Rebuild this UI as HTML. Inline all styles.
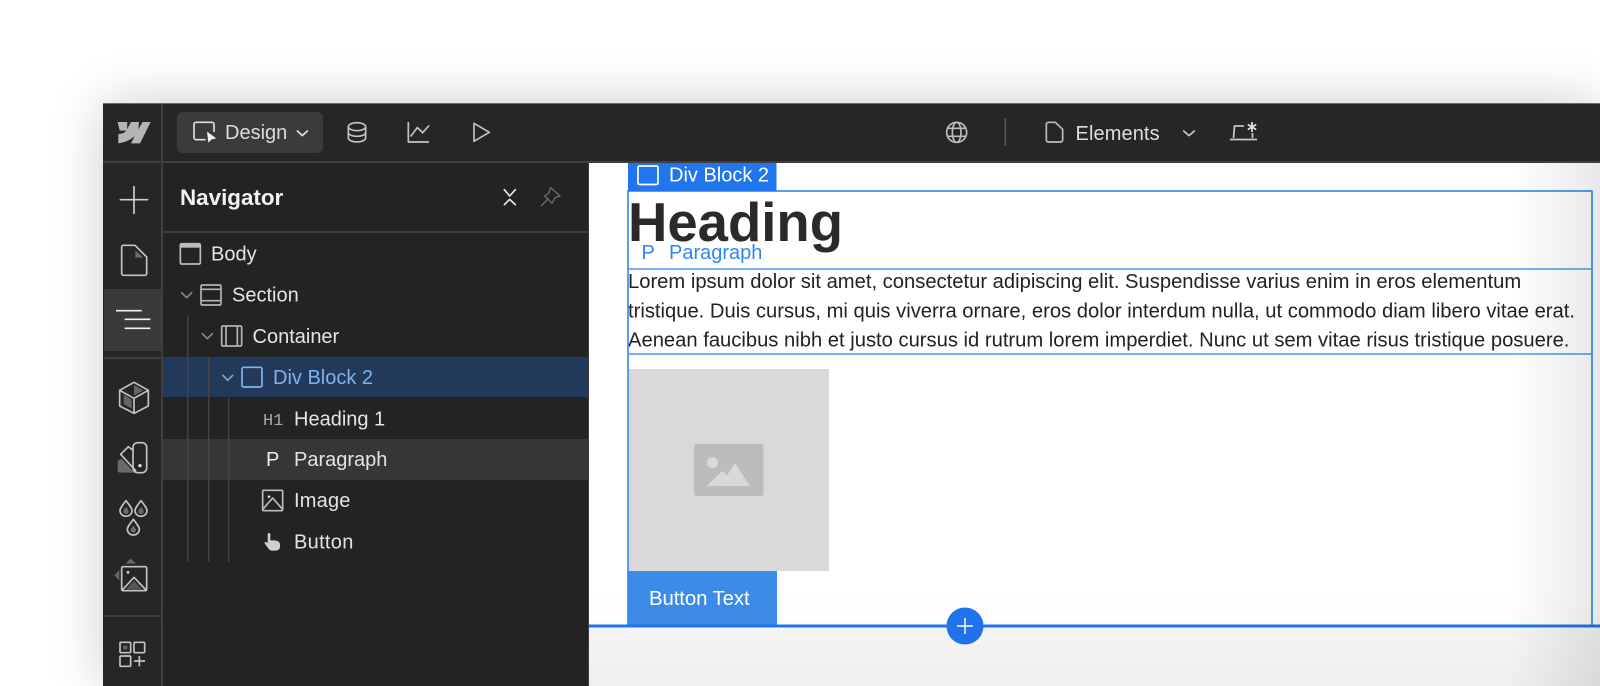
<!DOCTYPE html>
<html><head><meta charset="utf-8"><style>
html,body{margin:0;padding:0;width:1600px;height:686px;overflow:hidden;background:#fff}
#wrap{position:absolute;left:0;top:0;width:1600px;height:686px;overflow:hidden;background:#fff}
svg{display:block;position:absolute;left:0;top:0;filter:blur(.35px)}
text{font-family:"Liberation Sans",sans-serif}
#win{position:absolute;left:103px;top:103px;width:1497px;height:583px;border-radius:5px 0 0 0;box-shadow:0 0 55px rgba(0,0,0,.2);background:#262626}
</style></head><body>
<div id="wrap">
<div id="win"></div>
<svg width="1600" height="686" viewBox="0 0 1600 686" xmlns="http://www.w3.org/2000/svg">
<defs>
<linearGradient id="r" x1="0" x2="1" y1="0" y2="0"><stop offset="0" stop-color="#000" stop-opacity="0"/><stop offset="1" stop-color="#000" stop-opacity=".09"/></linearGradient>
<linearGradient id="b" x1="0" x2="0" y1="0" y2="1"><stop offset="0" stop-color="#000" stop-opacity="0"/><stop offset=".4" stop-color="#000" stop-opacity=".012"/><stop offset="1" stop-color="#000" stop-opacity=".035"/></linearGradient>
</defs>
<!-- chrome -->
<rect x="103" y="103" width="1497" height="1" fill="#6a6a6a"/>
<rect x="103" y="104" width="1497" height="58" fill="#262626"/>
<rect x="103" y="163" width="59" height="523" fill="#262626"/>
<rect x="163" y="163" width="425" height="523" fill="#232323"/>
<rect x="103" y="161" width="1497" height="2" fill="#3f3f3f"/>
<rect x="161" y="104" width="2" height="582" fill="#3f3f3f"/>
<rect x="588" y="163" width="1" height="523" fill="#3f3f3f"/>
<rect x="163" y="231" width="425" height="2" fill="#3f3f3f"/>
<rect x="104" y="289" width="57" height="62" fill="#3a3a3a"/>
<rect x="104" y="357" width="57" height="2" fill="#3f3f3f"/>
<rect x="104" y="615" width="57" height="2" fill="#3f3f3f"/>
<rect x="163" y="357" width="425" height="40" fill="#23395b"/>
<rect x="163" y="439" width="425" height="41" fill="#363636"/>
<rect x="177" y="112" width="146" height="41" rx="6" fill="#3b3b3b"/>
<!-- guide lines -->
<g fill="#444"><rect x="187" y="316" width="1.4" height="246"/><rect x="208" y="357" width="1.4" height="205"/><rect x="228" y="398" width="1.4" height="164"/></g>

<!-- zoom1 coordinates -->
<g transform="translate(90 90) scale(.33333)" fill="none" stroke="#c4c4c4" stroke-width="5" stroke-linecap="round" stroke-linejoin="round">
<path stroke="#e0e0e0" d="M345 149 H318 a6 6 0 0 1-6-6 V103 a6 6 0 0 1 6-6 H366 a6 6 0 0 1 6 6 V124"/>
<path stroke="none" fill="#f0f0f0" d="M351 125 L379 145 L365 148 L355 158 Z"/>
<path stroke="#e0e0e0" d="M622 123 L637 137 L652 123"/>
<path d="M775 110 V143 C775 160 827 160 827 143 V110"/><ellipse cx="801" cy="110" rx="26" ry="12"/><path d="M775 127 C775 143 827 143 827 127"/>
<path stroke-linecap="butt" d="M955 96 V156 H1017"/><path stroke-linejoin="miter" d="M963 138 L982 113 L998 128 L1016 108"/>
<path d="M1152 100 L1198 127 L1152 154 Z"/>
<path stroke="#cfcfcf" d="M132 290 V370 M91 329 H173"/>
<path d="M135 466 H100 a5 5 0 0 0-5 5 V551 a5 5 0 0 0 5 5 H165 a5 5 0 0 0 5-5 V501 Z"/>
<path stroke="none" fill="#6a6a6a" d="M136 481 L160 503 H136 Z"/>
<path stroke="#f2f2f2" stroke-linecap="butt" d="M78 662 H155 M104 688 H181 M104 715 H181"/>
<path stroke="#e8e8e8" d="M1243 299 L1259 318 L1276 299 M1243 344 L1259 328 L1276 344"/>
<path stroke="#6e6e6e" stroke-width="4" d="M1354 347 L1375 326 M1382 293 L1410 318 L1395 323 L1386 340 L1364 318 L1376 310 Z"/>
<rect x="271" y="461" width="60" height="61" rx="4" stroke="#bdbdbd"/><rect x="271" y="461" width="60" height="12" stroke="none" fill="#bdbdbd"/>
<path stroke="#8a8a8a" d="M275 608 L290 623 L305 608 M337 731 L352 746 L367 731"/>
<rect x="333" y="585" width="60" height="60" rx="4" stroke="#b5b5b5"/><path stroke="#b5b5b5" stroke-linecap="butt" d="M333 598 H393 M333 632 H393"/>
<rect x="395" y="708" width="60" height="60" rx="4" stroke="#b5b5b5"/><path stroke="#b5b5b5" stroke-linecap="butt" d="M408 708 V768 M442 708 V768"/>
</g>
<!-- logo -->
<g transform="translate(105 110) scale(.33333)">
<path fill="#b5b5b5" d="M38 36 H67 L66 58 L78 36 H102 L100 58 L113 36 H137 L105 100 H78 L90 76 C80 88 62 97 40 100 V72 C50 72 58 69 64 62 H44 Z"/>
</g>
<!-- swatch + drops -->
<g transform="translate(105 430) scale(.33333)" fill="none" stroke="#c4c4c4" stroke-width="5" stroke-linecap="round" stroke-linejoin="round">
<path stroke="none" fill="#6a6a6a" d="M38 92 V121 a7 7 0 0 0 7 7 H88 L50 86 Z"/>
<path d="M83 60 L70 50 L47 73 L92 122"/>
<rect x="84" y="38" width="41" height="90" rx="14"/>
<circle cx="105" cy="107" r="5" fill="#e0e0e0" stroke="none"/>
<path d="M63 212 C52 226 45 235 45 242 a18 17 0 0 0 36 0 C81 235 74 226 63 212 Z M108 212 C97 226 90 235 90 242 a18 17 0 0 0 36 0 C126 235 119 226 108 212 Z M85 268 C74 282 67 291 67 298 a18 17 0 0 0 36 0 C103 291 96 282 85 268 Z"/>
<path stroke="none" fill="#6a6a6a" d="M63 231 C58 237 55 241 55 244 a8 8 0 0 0 16 0 C71 241 68 237 63 231 Z M108 231 C103 237 100 241 100 244 a8 8 0 0 0 16 0 C116 241 113 237 108 231 Z M85 287 C80 293 77 297 77 300 a8 8 0 0 0 16 0 C93 297 90 293 85 287 Z"/>
</g>

<!-- zoom2 coordinates -->
<g transform="translate(90 360) scale(.33333)" fill="none" stroke="#c4c4c4" stroke-width="5" stroke-linecap="round" stroke-linejoin="round">
<path stroke="#8ba4c6" d="M399 46 L413 61 L428 46"/>
<rect x="456" y="22" width="60" height="59" rx="5" stroke="#80b4ef"/>
<path stroke="none" fill="#666" d="M132 75 L160 91 L132 107 Z M101 104 L125 118 V146 L101 132 Z"/>
<path d="M132 67 L175 91 V138 L132 160 L89 138 V91 Z M89 91 L132 115 L175 91 M132 115 V160"/>
<path stroke="none" fill="#666" d="M122 596 L106 611 H138 Z M73 646 L88 630 V662 Z"/>
<rect x="95" y="620" width="75" height="72" rx="4"/>
<circle cx="114" cy="637" r="4" fill="#ddd" stroke="none"/>
<path d="M97 690 L132 652 L168 690"/>
<path stroke="none" fill="#555" d="M108 688 L132 662 L156 688 Z"/>
<rect x="90" y="847" width="32" height="31" rx="3"/><rect x="100" y="857" width="12" height="11" fill="#666" stroke="none"/>
<rect x="132" y="847" width="32" height="31" rx="3"/>
<rect x="90" y="888" width="32" height="31" rx="3"/>
<path stroke-linecap="butt" d="M132 903 H165 M148 888 V919"/>
<rect x="518" y="391" width="60" height="61" rx="3" stroke="#bdbdbd"/>
<circle cx="537" cy="410" r="4" fill="#ddd" stroke="none"/>
<path stroke="#bdbdbd" d="M520 446 L548 414 L576 446"/>
<path stroke="none" fill="#cfcfcf" d="M533 523 a4 4 0 0 1 8 0 V541 h8 c12 0 21 3 21 13 v6 c0 8-6 12-14 12 h-9 c-6 0-10-3-13-8 l-10-14 c-2-3 3-6 6-3 l3 3 Z"/>
</g>

<!-- zoom3 coordinates -->
<g transform="translate(900 100) scale(.33333)" fill="none" stroke="#bdbdbd" stroke-width="5" stroke-linecap="round" stroke-linejoin="round">
<circle cx="170" cy="97" r="30"/><ellipse cx="170" cy="97" rx="13" ry="30"/><path stroke-linecap="butt" d="M143 85 H197 M143 109 H197"/>
<path stroke="#565656" stroke-linecap="butt" d="M316 55 V138"/>
<path d="M466 67 H445 a6 6 0 0 0-6 6 V120 a6 6 0 0 0 6 6 H482 a6 6 0 0 0 6-6 V88 Z"/>
<path stroke="#c8c8c8" d="M851 93 L867 107 L883 93"/>
</g>
<!-- publish-ish icon -->
<path d="M1230 139.500 H1257 M1233.500 138 L1234.500 126 H1244 M1252.500 133 V138" fill="none" stroke="#c4c4c4" stroke-width="1.8"/>
<path d="M1252 122 V132 M1247.800 124.500 L1256.200 129.500 M1256.200 124.500 L1247.800 129.500" fill="none" stroke="#dedede" stroke-width="1.8"/>

<!-- chrome text -->
<g fill="#e4e4e4" font-size="20">
<text x="225" y="139" fill="#dcdcdc">Design</text>
<text x="180" y="205" font-size="22.400" font-weight="700" fill="#f2f2f2">Navigator</text>
<text x="211" y="260.500">Body</text>
<text x="232" y="301.500">Section</text>
<text x="252.500" y="343">Container</text>
<text x="273" y="384" fill="#7fb2ee">Div Block 2</text>
<text x="263" y="425" fill="#a8a8a8" font-size="17" style="font-family:'Liberation Mono',monospace">H1</text>
<text x="294" y="425.500">Heading 1</text>
<text x="266" y="466" fill="#eee">P</text>
<text x="294" y="466">Paragraph</text>
<text x="294" y="507" letter-spacing=".2">Image</text>
<text x="294" y="548.500" letter-spacing=".3">Button</text>
<text x="1075.500" y="140" fill="#dedede" letter-spacing=".1">Elements</text>
</g>

<!-- canvas -->
<rect x="589" y="163" width="1011" height="523" fill="#fff"/>
<rect x="589" y="628" width="1011" height="58" fill="#f7f7f8"/>
<text x="628" y="241" font-size="54.500" font-weight="700" fill="#2a2a2a">Heading</text>
<g font-size="20.200" fill="#222">
<text x="628" y="288">Lorem ipsum dolor sit amet, consectetur adipiscing elit. Suspendisse varius enim in eros elementum</text>
<text x="628" y="317.500">tristique. Duis cursus, mi quis viverra ornare, eros dolor interdum nulla, ut commodo diam libero vitae erat.</text>
<text x="628" y="346.500">Aenean faucibus nibh et justo cursus id rutrum lorem imperdiet. Nunc ut sem vitae risus tristique posuere.</text>
</g>
<rect x="629" y="369" width="200" height="202" fill="#d9d9d9"/>
<rect x="694" y="444" width="69.500" height="52" rx="2.500" fill="#bcbcbc"/>
<circle cx="712.500" cy="462.500" r="5.500" fill="#d9d9d9"/>
<path d="M707 486 L722 471 L727 475.500 L735 463 L750 486 Z" fill="#d9d9d9"/>
<rect x="628" y="571" width="149" height="54" fill="#3c8be6"/>
<text x="649" y="605" font-size="20.400" fill="#fff" letter-spacing="-.1">Button Text</text>
<!-- selection -->
<g fill="none" stroke="#2f86f0">
<rect x="628" y="191" width="964" height="435" stroke-width="1.600"/>
<path d="M628 269 H1592 M628 354 H1592" stroke="#4b97f2" stroke-width="1.500"/>
</g>
<rect x="628" y="163" width="148.500" height="28" fill="#2176ee"/>
<rect x="638" y="166" width="20" height="18.500" rx="1.500" fill="none" stroke="#fff" stroke-width="1.700"/>
<text x="669" y="181.500" font-size="20" fill="#fff">Div Block 2</text>
<text x="641.500" y="259" font-size="20" fill="#2e86f5">P</text>
<text x="669" y="259" font-size="20" fill="#2e86f5">Paragraph</text>
<rect x="589" y="624.500" width="1011" height="3" fill="#2176ee"/>
<circle cx="965" cy="626" r="18.500" fill="#1f74ee"/>
<path d="M965 618 V634 M957 626 H973" stroke="#fff" stroke-width="1.500"/>
<!-- vignettes -->
<rect x="1510" y="163" width="90" height="523" fill="url(#r)"/>
<rect x="589" y="590" width="1011" height="96" fill="url(#b)"/>
</svg>
</div>
</body></html>
